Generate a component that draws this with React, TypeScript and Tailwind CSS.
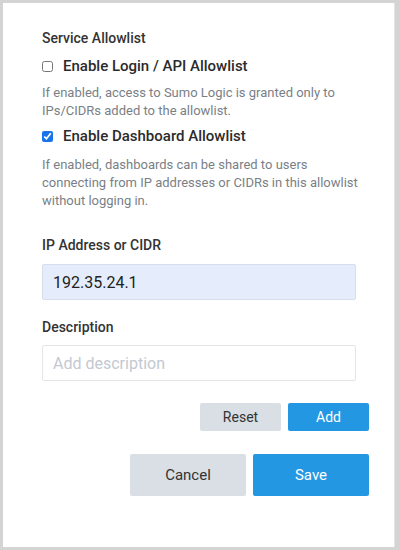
import { useState } from "react";

export default function App() {
  const [loginAllow, setLoginAllow] = useState(false);
  const [dashAllow, setDashAllow] = useState(true);
  const [ip, setIp] = useState("192.35.24.1");
  const [desc, setDesc] = useState("");

  return (
    <div
      className="w-[399px] h-[550px] bg-[#d4d4d4] pl-[3px] pt-[3px] pr-[4px] pb-[3px]"
      style={{ fontFamily: "Roboto, 'Liberation Sans', sans-serif" }}
    >
      <div className="h-full bg-white border-r border-[#e6e6e6] pl-[39px] pr-[25px] pt-[26px]">
        <div className="text-[14px] font-medium text-[#333] leading-[18px]">Service Allowlist</div>

        <label className="mt-[9px] flex items-center gap-[10px] cursor-pointer">
          <input
            type="checkbox"
            checked={loginAllow}
            onChange={() => setLoginAllow(!loginAllow)}
            className="w-[11px] h-[11px] m-0 accent-[#1a73e8]"
          />
          <span className="text-[15px] font-medium text-[#2b2b2b] leading-[20px]">Enable Login / API Allowlist</span>
        </label>
        <p className="mt-[8px] text-[13px] text-[#7a7f87] leading-[18px]">
          If enabled, access to Sumo Logic is granted only to IPs/CIDRs added to the allowlist.
        </p>

        <label className="mt-[6px] flex items-center gap-[10px] cursor-pointer">
          <input
            type="checkbox"
            checked={dashAllow}
            onChange={() => setDashAllow(!dashAllow)}
            className="w-[11px] h-[11px] m-0 accent-[#1a73e8]"
          />
          <span className="text-[15px] font-medium text-[#2b2b2b] leading-[20px]">Enable Dashboard Allowlist</span>
        </label>
        <p className="mt-[10px] text-[13px] text-[#7a7f87] leading-[18px]">
          If enabled, dashboards can be shared to users connecting from IP addresses or CIDRs in this allowlist without logging in.
        </p>

        <div className="mt-[26px] text-[14px] font-medium text-[#333] leading-[18px]">IP Address or CIDR</div>
        <input
          value={ip}
          onChange={(e) => setIp(e.target.value)}
          className="mt-[10px] block w-[314px] h-[36px] px-[10px] bg-[#e5edfc] border border-[#d6deea] rounded-[2px] text-[16px] text-[#222] outline-none"
        />

        <div className="mt-[18px] text-[14px] font-medium text-[#333] leading-[18px]">Description</div>
        <input
          value={desc}
          onChange={(e) => setDesc(e.target.value)}
          placeholder="Add description"
          className="mt-[9px] block w-[314px] h-[36px] px-[10px] bg-white border border-[#e3e5e8] rounded-[2px] text-[16px] text-[#222] placeholder:text-[#c3c9d1] outline-none"
        />

        <div className="mt-[22px] flex justify-end gap-[7px]">
          <button className="w-[81px] h-[28px] rounded-[2px] bg-[#d9dfe5] text-[14px] text-[#333]">Reset</button>
          <button className="w-[81px] h-[28px] rounded-[2px] bg-[#2497e3] text-[14px] text-white">Add</button>
        </div>

        <div className="mt-[23px] flex justify-end gap-[7px]">
          <button className="w-[116px] h-[42px] rounded-[2px] bg-[#d9dfe5] text-[15px] text-[#333]">Cancel</button>
          <button className="w-[116px] h-[42px] rounded-[2px] bg-[#2497e3] text-[15px] text-white">Save</button>
        </div>
      </div>
    </div>
  );
}
